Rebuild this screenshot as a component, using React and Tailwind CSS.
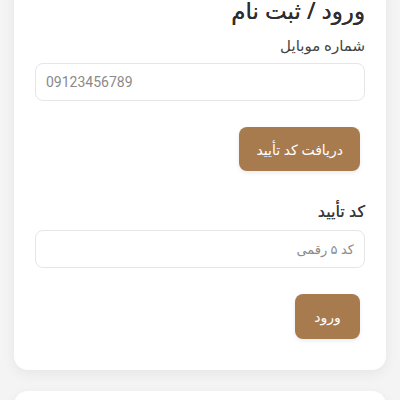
export default function App() {
  return (
    <div
      dir="rtl"
      className="min-h-[400px] bg-[#f4f4f4] overflow-hidden"
      style={{ fontFamily: '"Noto Sans", "DejaVu Sans", sans-serif' }}
    >
      <div className="-mt-[24px] mx-[14px] bg-white rounded-[14px] shadow-[0_4px_14px_rgba(0,0,0,0.06)] px-[21px] pt-[19px] pb-[31px]">
        <h1 className="text-[23px] leading-[30px] font-normal text-[#2e2e2e] [text-shadow:0_0_0.4px_#2e2e2e]">ورود / ثبت نام</h1>
        <label className="block mt-[10px] text-[15px] leading-[20px] text-[#444]">شماره موبایل</label>
        <input
          dir="ltr"
          placeholder="09123456789"
          className="block mt-[8px] w-full h-[38px] rounded-[8px] border border-[#e6e6e6] px-[10px] text-[14px] placeholder:text-[#8a8a8a] outline-none"
          style={{ fontFamily: 'Roboto, sans-serif' }}
        />
        <div className="mt-[26px] flex">
          <button className="mr-[5px] h-[44px] px-[17px] rounded-[8px] bg-[#a87b4f] text-white text-[14px] shadow-[0_2px_4px_rgba(0,0,0,0.08)]">
            دریافت کد تأیید
          </button>
        </div>
        <label className="block mt-[30px] text-[16px] leading-[20px] font-normal text-[#3a3a3a] [text-shadow:0_0_0.4px_#3a3a3a]">کد تأیید</label>
        <input
          placeholder="کد ۵ رقمی"
          className="block mt-[9px] w-full h-[38px] rounded-[8px] border border-[#e6e6e6] px-[10px] text-[13px] placeholder:text-[#8a8a8a] outline-none"
        />
        <div className="mt-[26px] flex">
          <button className="mr-[5px] h-[45px] w-[65px] rounded-[8px] bg-[#a87b4f] text-white text-[14px] shadow-[0_2px_4px_rgba(0,0,0,0.08)]">
            ورود
          </button>
        </div>
      </div>
      <div className="mt-[21px] mx-[14px] h-[60px] bg-white rounded-[14px] shadow-[0_4px_14px_rgba(0,0,0,0.06)]"></div>
    </div>
  );
}
